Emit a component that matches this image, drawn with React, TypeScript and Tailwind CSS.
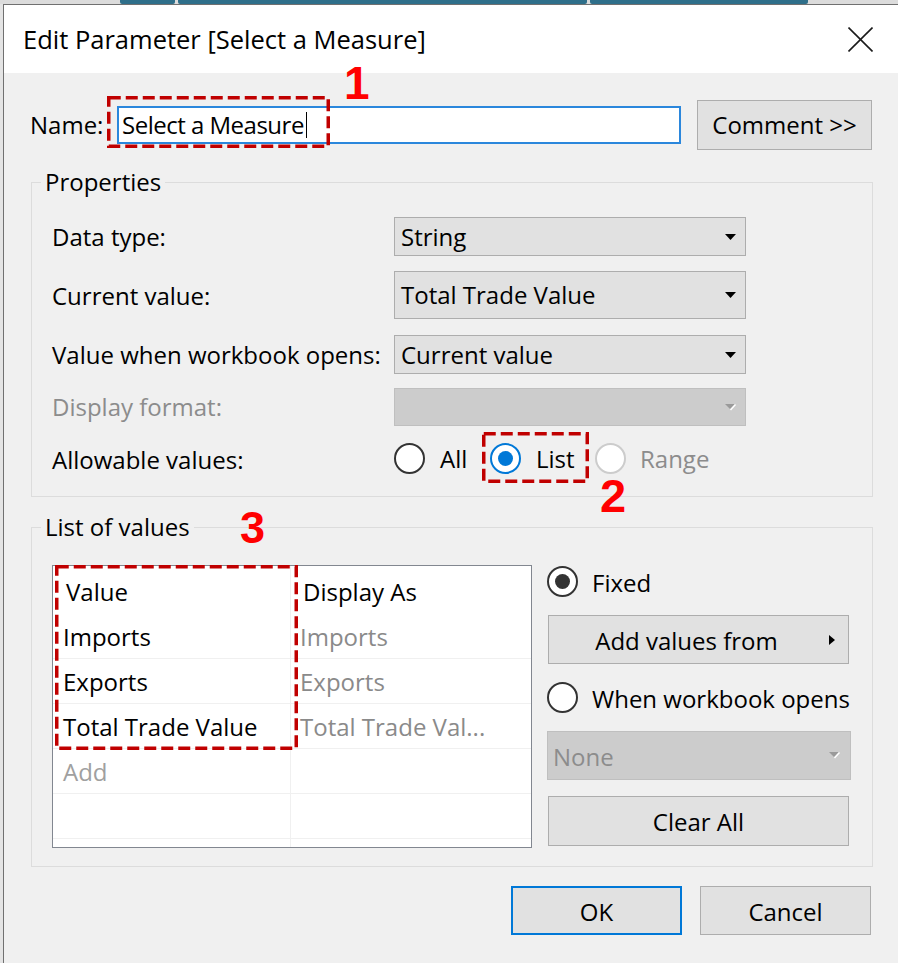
import React from "react";

function Arrow({ disabled }: { disabled?: boolean }) {
  if (disabled) {
    return (
      <svg width="12" height="7" viewBox="0 0 12 7">
        <polygon points="1,0 11,0 6,5" fill="#9a9a9a" />
        <line x1="11.5" y1="0.5" x2="6.5" y2="6" stroke="#ffffff" strokeWidth="1.5" />
      </svg>
    );
  }
  return (
    <svg width="11" height="6" viewBox="0 0 11 6">
      <polygon points="0,0 11,0 5.5,6" fill="#000000" />
    </svg>
  );
}

function Select({
  value,
  h,
  disabled,
}: {
  value?: string;
  h: "h38" | "h39" | "h48";
  disabled?: boolean;
}) {
  const hc = h === "h38" ? "h-[38px]" : h === "h39" ? "h-[39px]" : "h-[48px]";
  return (
    <div
      className={`${hc} w-[352px] flex items-center justify-between pl-[6px] pr-[9px] border ${
        disabled ? "bg-[#cccccc] border-[#bfbfbf]" : "bg-[#e1e1e1] border-[#adadad]"
      }`}
    >
      <span>{value}</span>
      <Arrow disabled={disabled} />
    </div>
  );
}

function Radio({ kind }: { kind: "off" | "blue" | "disabled" | "dark" }) {
  const ring =
    kind === "blue"
      ? "border-[#0078d7]"
      : kind === "disabled"
      ? "border-[#cccccc]"
      : "border-[#333333]";
  return (
    <div
      className={`w-[31px] h-[31px] shrink-0 rounded-full border-2 ${ring} bg-white flex items-center justify-center`}
    >
      {kind === "blue" && <div className="w-[15px] h-[15px] rounded-full bg-[#0078d7]" />}
      {kind === "dark" && <div className="w-[15px] h-[15px] rounded-full bg-[#333333]" />}
    </div>
  );
}

function DashBox({ className, w, h }: { className: string; w: number; h: number }) {
  return (
    <svg className={className} width={w} height={h}>
      <rect
        x="1.75"
        y="1.75"
        width={w - 3.5}
        height={h - 3.5}
        fill="none"
        stroke="#c00000"
        strokeWidth="3.5"
        strokeDasharray="12 5"
      />
    </svg>
  );
}

export default function App() {
  return (
    <div className="w-[898px] h-[963px] relative overflow-hidden bg-[#f0f0f0] text-black text-[24px] leading-[24px] [font-family:'Open_Sans','Noto_Sans',sans-serif] flex flex-col">
      {/* background window strip */}
      <div className="h-[4px] shrink-0 flex bg-[#dcdcdc]">
        <div className="w-[120px]" />
        <div className="w-[55px] bg-[#2f6f8a] rounded-b-[2px]" />
        <div className="w-[3px]" />
        <div className="w-[409px] bg-[#2f6f8a] rounded-b-[2px]" />
        <div className="w-[3px]" />
        <div className="w-[218px] bg-[#2f6f8a] rounded-b-[2px]" />
      </div>

      <div className="flex flex-1">
        <div className="w-[3px] shrink-0 bg-[#e4e4e4]" />
        <div className="flex-1 flex flex-col border-l border-t border-[#707070]">
          {/* title bar */}
          <div className="h-[68px] shrink-0 bg-white flex items-center justify-between pl-[19px] pr-[25px]">
            <span className="text-[25.5px] leading-[26px]">Edit Parameter [Select a Measure]</span>
            <svg width="25" height="25" viewBox="0 0 25 25">
              <line x1="0.5" y1="0.5" x2="24.5" y2="24.5" stroke="#1a1a1a" strokeWidth="1.6" />
              <line x1="24.5" y1="0.5" x2="0.5" y2="24.5" stroke="#1a1a1a" strokeWidth="1.6" />
            </svg>
          </div>

          {/* body */}
          <div className="flex flex-col">
            {/* name row */}
            <div className="mt-[27px] h-[50px] ml-[26px] flex items-center">
              <span className="w-[87px]">Name:</span>
              <div className="w-[564px] h-[38px] bg-white border-2 border-[#2b87dc] flex items-center pl-[3px]">
                <span className="tracking-[-0.5px]">Select a Measure</span>
                <span className="w-px h-[26px] bg-black ml-[2px]" />
              </div>
              <div className="ml-[16px] w-[175px] h-[50px] bg-[#e1e1e1] border border-[#adadad] flex items-center justify-center">
                Comment &gt;&gt;
              </div>
            </div>

            {/* Properties */}
            <fieldset className="mt-[20px] ml-[27px] w-[842px] border border-[#dcdcdc]">
              <legend className="ml-[9px] px-[4px] leading-[24px]">Properties</legend>
              <div className="pl-[20px] pb-[22px] flex flex-col">
                <div className="mt-[23px] flex items-center">
                  <span className="w-[342px]">Data type:</span>
                  <Select value="String" h="h39" />
                </div>
                <div className="mt-[15px] flex items-center">
                  <span className="w-[342px] pt-[2px]">Current value:</span>
                  <Select value="Total Trade Value" h="h48" />
                </div>
                <div className="mt-[16px] flex items-center">
                  <span className="w-[342px]">Value when workbook opens:</span>
                  <Select value="Current value" h="h39" />
                </div>
                <div className="mt-[14px] flex items-center">
                  <span className="w-[342px] text-[#8c8c8c]">Display format:</span>
                  <Select h="h38" disabled />
                </div>
                <div className="mt-[16px] h-[32px] flex items-center">
                  <span className="w-[342px] pt-[3px]">Allowable values:</span>
                  <div className="w-[96px] flex items-center">
                    <Radio kind="off" />
                    <span className="ml-[15px] pt-[2px]">All</span>
                  </div>
                  <div className="w-[105px] flex items-center">
                    <Radio kind="blue" />
                    <span className="ml-[15px] pt-[2px]">List</span>
                  </div>
                  <div className="flex items-center">
                    <Radio kind="disabled" />
                    <span className="ml-[14px] pt-[2px] text-[#8c8c8c]">Range</span>
                  </div>
                </div>
              </div>
            </fieldset>

            {/* List of values */}
            <fieldset className="mt-[18px] ml-[27px] w-[842px] border border-[#dcdcdc]">
              <legend className="ml-[9px] px-[4px] leading-[24px]">List of values</legend>
              <div className="pl-[20px] pt-[26px] pb-[18px] flex">
                <div className="w-[480px] h-[283px] bg-white border border-[#828790] flex flex-col">
                  <div className="h-[48px] flex">
                    <div className="w-[238px] border-r border-[#f0f0f0] pl-[13px] pt-[3px] flex items-center">Value</div>
                    <div className="flex-1 pl-[12px] pt-[3px] flex items-center">Display As</div>
                  </div>
                  {[
                    ["Imports", "Imports"],
                    ["Exports", "Exports"],
                    ["Total Trade Value", "Total Trade Val..."],
                  ].map(([a, b]) => (
                    <div key={a} className="h-[45px] flex border-b border-[#f0f0f0]">
                      <div className="w-[238px] border-r border-[#f0f0f0] pl-[10px] pt-[2px] flex items-center">{a}</div>
                      <div className="flex-1 pl-[9px] pt-[2px] flex items-center text-[#8a8a8a]">{b}</div>
                    </div>
                  ))}
                  <div className="h-[45px] flex border-b border-[#f0f0f0]">
                    <div className="w-[238px] border-r border-[#f0f0f0] pl-[10px] pt-[2px] flex items-center text-[#a0a0a0]">Add</div>
                    <div className="flex-1" />
                  </div>
                  <div className="h-[45px] flex border-b border-[#f0f0f0]">
                    <div className="w-[238px] border-r border-[#f0f0f0]" />
                    <div className="flex-1" />
                  </div>
                  <div className="flex-1 flex">
                    <div className="w-[238px] border-r border-[#f0f0f0]" />
                  </div>
                </div>

                <div className="ml-[15px] w-[304px] flex flex-col">
                  <div className="mt-[1px] h-[31px] flex items-center">
                    <Radio kind="dark" />
                    <span className="ml-[14px] pt-[2px]">Fixed</span>
                  </div>
                  <div className="mt-[18px] ml-[1px] w-[301px] h-[49px] bg-[#e1e1e1] border border-[#adadad] flex items-center justify-center relative">
                    <span className="pr-[24px] pt-[2px]">Add values from</span>
                    <svg className="absolute right-[13px] top-[19px]" width="6" height="10" viewBox="0 0 6 10">
                      <polygon points="0,0 6,5 0,10" fill="#000" />
                    </svg>
                  </div>
                  <div className="mt-[18px] h-[31px] flex items-center">
                    <Radio kind="off" />
                    <span className="ml-[14px] pt-[2px]">When workbook opens</span>
                  </div>
                  <div className="mt-[18px] w-[304px] h-[49px] bg-[#cccccc] border border-[#bfbfbf] flex items-center justify-between pl-[5px] pr-[10px]">
                    <span className="text-[#8c8c8c] pt-[2px]">None</span>
                    <Arrow disabled />
                  </div>
                  <div className="mt-[16px] ml-[1px] w-[301px] h-[50px] bg-[#e1e1e1] border border-[#adadad] flex items-center justify-center">
                    <span className="pt-[2px]">Clear All</span>
                  </div>
                </div>
              </div>
            </fieldset>

            {/* bottom buttons */}
            <div className="mt-[19px] pr-[27px] flex justify-end gap-[18px]">
              <div className="w-[171px] h-[49px] bg-[#e1e1e1] border-2 border-[#0078d7] flex items-center justify-center">
                <span className="pt-[2px]">OK</span>
              </div>
              <div className="w-[171px] h-[49px] bg-[#e1e1e1] border border-[#adadad] flex items-center justify-center">
                <span className="pt-[2px]">Cancel</span>
              </div>
            </div>
          </div>
        </div>
      </div>

      {/* annotations */}
      <DashBox className="absolute left-[107px] top-[96px]" w={223} h={52} />
      <span className="absolute left-[344px] top-[60px] text-[46px] leading-[46px] font-bold text-[#ff0000] [font-family:'Liberation_Sans',Arial,sans-serif]">
        1
      </span>
      <DashBox className="absolute left-[482px] top-[432px]" w={107} h={51} />
      <span className="absolute left-[600px] top-[472px] text-[47px] leading-[47px] font-bold text-[#ff0000] [font-family:'Liberation_Sans',Arial,sans-serif]">
        2
      </span>
      <DashBox className="absolute left-[55px] top-[565px]" w={243} h={185} />
      <span className="absolute left-[240px] top-[505px] text-[45px] leading-[45px] font-bold text-[#ff0000] [font-family:'Liberation_Sans',Arial,sans-serif]">
        3
      </span>
    </div>
  );
}
